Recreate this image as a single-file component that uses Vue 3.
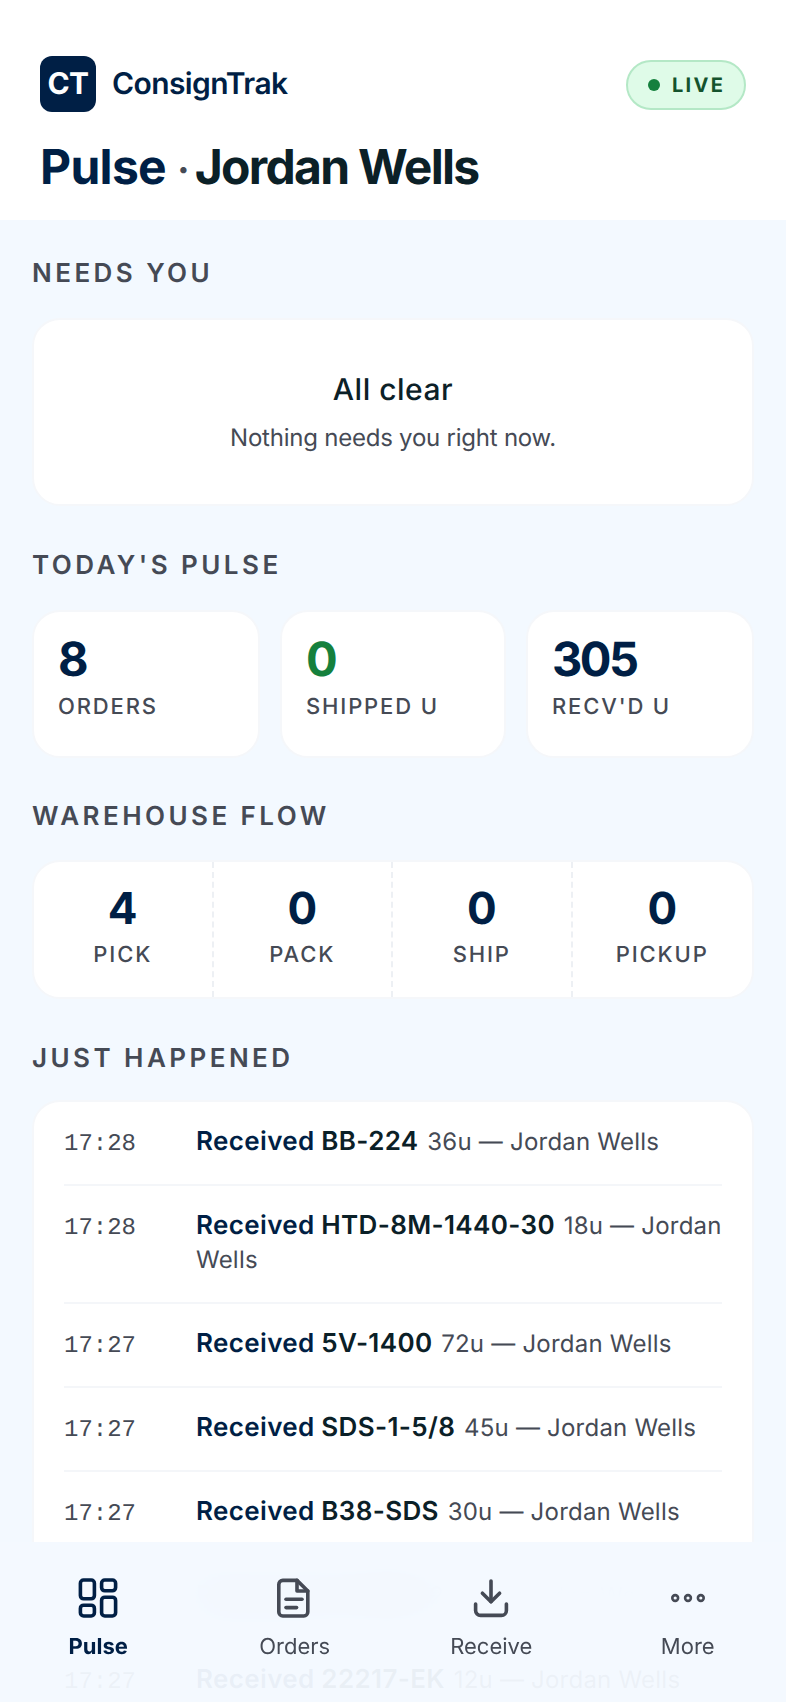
<script setup>
const stats = [
  { value: '8', label: 'ORDERS' },
  { value: '0', label: 'SHIPPED U', green: true },
  { value: '305', label: "RECV'D U" },
]
const flow = [
  { value: '4', label: 'PICK' },
  { value: '0', label: 'PACK' },
  { value: '0', label: 'SHIP' },
  { value: '0', label: 'PICKUP' },
]
const feed = [
  { t: '17:28', sku: 'BB-224', rest: '36u — Jordan Wells' },
  { t: '17:28', sku: 'HTD-8M-1440-30', rest: '18u — Jordan Wells' },
  { t: '17:27', sku: '5V-1400', rest: '72u — Jordan Wells' },
  { t: '17:27', sku: 'SDS-1-5/8', rest: '45u — Jordan Wells' },
  { t: '17:27', sku: 'B38-SDS', rest: '30u — Jordan Wells' },
  { t: '17:27', sku: '3V-800', rest: '24u — Jordan Wells' },
  { t: '17:27', sku: '22217-EK', rest: '12u — Jordan Wells' },
]
</script>

<template>
  <div class="app">
    <header class="head">
      <div class="toprow">
        <div class="brand">
          <div class="logo">CT</div>
          <span class="brandname">ConsignTrak</span>
        </div>
        <div class="live"><span class="dot"></span>LIVE</div>
      </div>
      <h1 class="title"><span class="navy pulse">Pulse</span><span class="sep">·</span><span>Jordan Wells</span></h1>
    </header>

    <main class="main">
      <h2 class="sec">NEEDS YOU</h2>
      <section class="card clear">
        <div class="clear-h">All clear</div>
        <div class="clear-s">Nothing needs you right now.</div>
      </section>

      <h2 class="sec">TODAY'S PULSE</h2>
      <section class="stats">
        <div v-for="s in stats" :key="s.label" class="card stat">
          <div class="stat-v" :class="{ green: s.green }">{{ s.value }}</div>
          <div class="stat-l">{{ s.label }}</div>
        </div>
      </section>

      <h2 class="sec tight">WAREHOUSE FLOW</h2>
      <section class="card flow">
        <div v-for="f in flow" :key="f.label" class="flow-c">
          <div class="flow-v">{{ f.value }}</div>
          <div class="flow-l">{{ f.label }}</div>
        </div>
      </section>

      <h2 class="sec tight2">JUST HAPPENED</h2>
      <section class="card feed">
        <div v-for="(r, i) in feed" :key="i" class="row">
          <span class="time">{{ r.t }}</span>
          <span class="msg"><b class="navy">Received</b> <b>{{ r.sku }}</b> <span class="rest">{{ r.rest }}</span></span>
        </div>
      </section>
    </main>

    <nav class="nav">
      <div class="tabs">
        <div class="tab active">
          <svg viewBox="0 0 24 24" class="ic"><rect x="3.2" y="3" width="7" height="9.4" rx="1.6"/><rect x="13.8" y="3" width="7" height="5.4" rx="1.6"/><rect x="13.8" y="11.6" width="7" height="9.4" rx="1.6"/><rect x="3.2" y="15.6" width="7" height="5.4" rx="1.6"/></svg>
          <span>Pulse</span>
        </div>
        <div class="tab">
          <svg viewBox="0 0 24 24" class="ic"><path d="M5.9 3.2H13l5.4 5.3V19a2 2 0 0 1-2 2H5.9a2 2 0 0 1-2-2V5.2a2 2 0 0 1 2-2z"/><path d="M13 3.2v5.3h5.4"/><path d="M7.5 12.6h8"/><path d="M7.5 16.8h5.3"/></svg>
          <span>Orders</span>
        </div>
        <div class="tab">
          <svg viewBox="0 0 24 24" class="ic"><path d="M12 3.5v10.3"/><path d="M7.7 9.6l4.3 4.3 4.3-4.3"/><path d="M4.3 15v3.2a2.5 2.5 0 0 0 2.5 2.5h10.4a2.5 2.5 0 0 0 2.5-2.5V15"/></svg>
          <span>Receive</span>
        </div>
        <div class="tab">
          <svg viewBox="0 0 24 24" class="ic dots"><circle cx="5.6" cy="12" r="1.45"/><circle cx="12" cy="12" r="1.45"/><circle cx="18.4" cy="12" r="1.45"/></svg>
          <span>More</span>
        </div>
      </div>
      <div class="safe"></div>
    </nav>
  </div>
</template>

<style>
html, body { margin: 0; background: #f3f9ff; }
</style>

<style scoped>
.app {
  position: relative;
  height: 1702px;
  overflow: hidden;
  background: #f3f9ff;
  font-family: Inter, "Noto Sans", sans-serif;
  color: #0b2027;
  text-rendering: geometricPrecision;
}
.head {
  background: #fff;
  height: 220px;
  box-sizing: border-box;
  padding: 56px 40px 0;
}
.toprow {
  display: flex;
  align-items: center;
  justify-content: space-between;
}
.brand { display: flex; align-items: center; gap: 16px; }
.logo {
  width: 56px;
  height: 56px;
  border-radius: 12px;
  background: #001f45;
  color: #fff;
  display: flex;
  align-items: center;
  justify-content: center;
  font-size: 30px;
  font-weight: 700;
  letter-spacing: -0.5px;
}
.brandname {
  font-size: 30px;
  font-weight: 600;
  letter-spacing: -0.6px;
  color: #001f45;
}
.live {
  display: flex;
  align-items: center;
  gap: 12px;
  box-sizing: border-box;
  height: 50px;
  width: 120px;
  margin-top: 2px;
  padding-left: 20px;
  border: 2px solid #b4e8c6;
  border-radius: 25px;
  background: #dffbe8;
  color: #14532d;
  font-size: 20px;
  font-weight: 700;
  letter-spacing: 2.3px;
}
.dot { width: 12px; height: 12px; border-radius: 50%; background: #15803d; }
.title {
  margin: 23px 0 0;
  font-size: 48px;
  line-height: 64px;
  font-weight: 650;
  letter-spacing: -1.7px;
  color: #0b2027;
}
.pulse { letter-spacing: -0.7px; }
.navy { color: #001f45; }
.sep {
  display: inline-block;
  margin: 0 5px 0 11px;
  color: #454a55;
  font-weight: 600;
  font-size: 40px;
  line-height: 40px;
  letter-spacing: 0;
}
.main { padding: 38px 32px 0; }
.sec {
  margin: 0 0 28px;
  font-size: 26px;
  line-height: 32px;
  font-weight: 600;
  letter-spacing: 3.45px;
  color: #454a55;
}
.sec.tight { margin-bottom: 27px; }
.sec.tight2 { margin-bottom: 25px; }
.card {
  background: #fff;
  border: 2px solid #f5f7fa;
  border-radius: 28px;
  box-sizing: border-box;
}
.clear {
  height: 188px;
  margin-bottom: 44px;
  padding-top: 2px;
  display: flex;
  flex-direction: column;
  align-items: center;
  justify-content: center;
}
.clear-h { font-size: 30px; line-height: 40px; font-weight: 500; letter-spacing: 0.5px; }
.clear-s { margin-top: 10px; font-size: 24px; line-height: 36px; letter-spacing: -0.23px; color: #454a55; }
.stats {
  display: grid;
  grid-template-columns: 228fr 226fr 228fr;
  gap: 20px;
  margin-bottom: 43px;
}
.stat { height: 148px; padding: 20px 24px 0; }
.stat-v {
  font-size: 47px;
  line-height: 56px;
  font-weight: 700;
  letter-spacing: -2.5px;
  color: #001f45;
}
.green { color: #15803d; }
.stat-l {
  margin-top: 4px;
  font-size: 22px;
  line-height: 30px;
  font-weight: 500;
  letter-spacing: 1.85px;
  color: #454a55;
}
.flow {
  display: grid;
  grid-template-columns: repeat(4, 1fr);
  height: 139px;
  margin-bottom: 44px;
}
.flow-c {
  text-align: center;
  padding-top: 21px;
  border-right: 2px dashed #edf0f4;
}
.flow-c:last-child { border-right: 0; }
.flow-v {
  font-size: 44px;
  line-height: 50px;
  font-weight: 700;
  color: #001f45;
}
.flow-l {
  margin-top: 7px;
  font-size: 22px;
  line-height: 30px;
  font-weight: 500;
  letter-spacing: 1.85px;
  color: #454a55;
}
.feed { padding: 0 30px; }
.row {
  display: flex;
  padding: 24px 0;
  border-bottom: 2px solid #f4f6f9;
  font-size: 24px;
  line-height: 34px;
}
.time {
  flex: 0 0 132px;
  margin: 2px 0 -2px;
  font-family: "Liberation Mono", monospace;
  font-size: 24px;
  color: #454a55;
}
.msg { flex: 1; margin: -1px -4px 1px 0; }
.msg b { font-size: 26px; line-height: 26px; font-weight: 600; letter-spacing: 0.36px; }
.rest { color: #454a55; letter-spacing: 0.22px; margin-left: 2px; }
.nav {
  position: absolute;
  left: 0;
  right: 0;
  bottom: 0;
  height: 160px;
  display: flex;
  flex-direction: column;
}
.tabs {
  flex: 1;
  display: grid;
  grid-template-columns: repeat(4, 1fr);
  background: rgba(243, 249, 255, 0.95);
  -webkit-backdrop-filter: blur(24px);
  backdrop-filter: blur(24px);
}
.safe { height: 42px; background: rgba(243, 249, 255, 0.955); }
.tab {
  display: flex;
  flex-direction: column;
  align-items: center;
  padding-top: 32px;
  font-size: 22px;
  line-height: 28px;
  color: #454a55;
}
.tab.active { color: #001f45; font-weight: 700; }
.ic {
  width: 48px;
  height: 48px;
  margin-bottom: 11px;
  fill: none;
  stroke: currentColor;
  stroke-width: 1.8;
  stroke-linecap: round;
  stroke-linejoin: round;
}
.ic.dots { stroke-width: 1.3; }
</style>
